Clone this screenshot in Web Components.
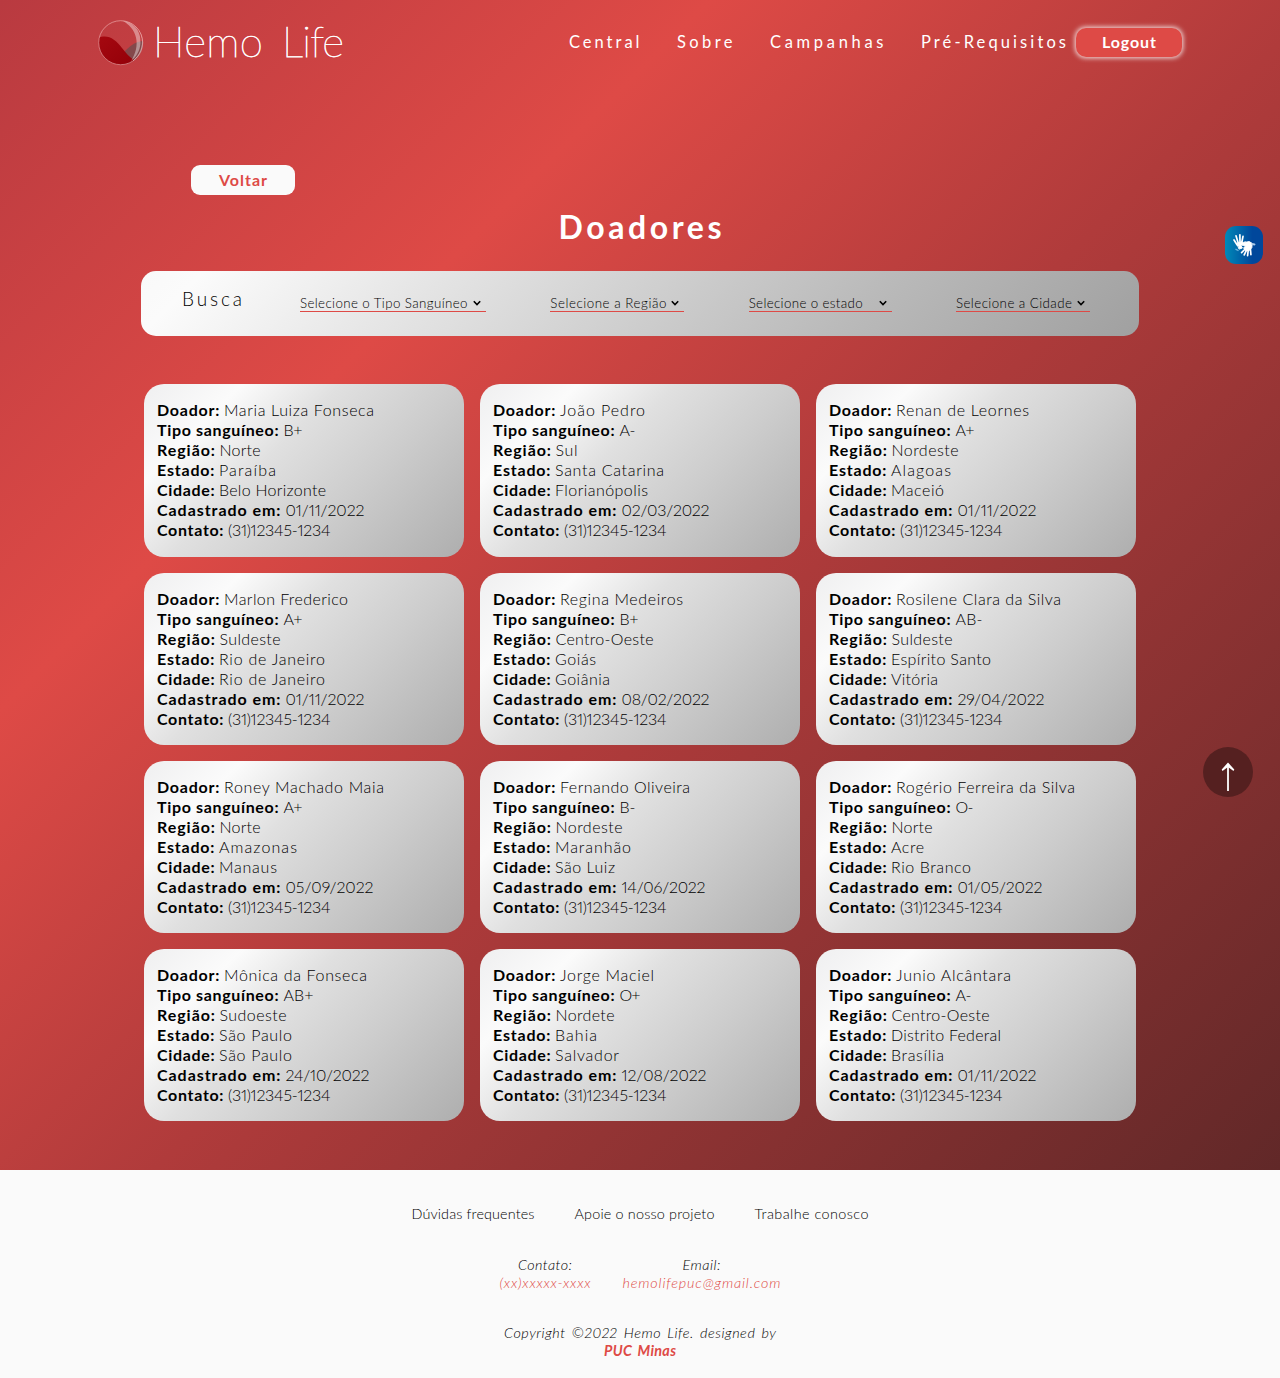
<!DOCTYPE html>
<html lang="pt-BR">
<head>
<meta charset="utf-8">
<title>Hemo Life - Doadores</title>
<style>
html, body { margin: 0; padding: 0; }
body { font-family: Lato, "Open Sans", sans-serif; color: #000; background: #fafafa; }
</style>
</head>
<body>
<hemo-page></hemo-page>
<script>
// Spaces its letters so that the word takes the width given in "w".
class FitText extends HTMLElement {
  constructor() {
    super();
    this.attachShadow({ mode: 'open' }).innerHTML =
      '<style>:host{display:inline-block;white-space:pre;font-feature-settings:"pnum" 1,"liga" 0}span{display:inline-block}</style><span><slot></slot></span>';
  }
  connectedCallback() {
    const w = parseFloat(this.getAttribute('w'));
    const n = this.textContent.length;
    const span = this.shadowRoot.querySelector('span');
    if (!w || n < 2) return;
    const gap = (w - span.getBoundingClientRect().width) / (n - 1);
    span.style.letterSpacing = gap + 'px';
    span.style.marginRight = -gap + 'px';
  }
}

class HemoLogo extends HTMLElement {
  constructor() {
    super();
    this.attachShadow({ mode: 'open' }).innerHTML = `
<style>
:host{display:flex;align-items:flex-start;height:46px}
svg{display:block;width:46px;height:46px}
.name{display:flex;gap:19px;margin:-4px 0 0 9px;font:100 42px/50px Lato,sans-serif;color:#fff;-webkit-text-stroke:.75px #fff}
</style>
<svg viewBox="0 0 46 46">
<defs><clipPath id="c"><circle cx="22.7" cy="22.7" r="22.2"/></clipPath>
<linearGradient id="b" x1="0" y1="0" x2="1" y2="1"><stop offset="0" stop-color="#a50810"/><stop offset="1" stop-color="#930008"/></linearGradient></defs>
<g clip-path="url(#c)">
<path d="M25 33C31 27 37 21 46 21V46H26Z" fill="#84484b"/>
<path d="M0 18C10 14 17 19 24 28C28 33 31 37 36 40L32 46H0Z" fill="url(#b)"/>
<path d="M23 0C38 3 43 12 42.5 23C42 31 38 37 33 41C43 26 40 8 23 0Z" fill="#fff" opacity=".4"/>
<path d="M25 0C49 5 49 30 35 41" fill="none" stroke="#fff" stroke-width="1" opacity=".4"/>
</g>
<circle cx="22.7" cy="22.7" r="22" fill="none" stroke="#f3b9b9" stroke-width=".9" opacity=".65"/>
</svg>
<div class="name"><fit-text w="110">Hemo</fit-text><fit-text w="62">Life</fit-text></div>`;
  }
}

class HemoHeader extends HTMLElement {
  constructor() {
    super();
    this.attachShadow({ mode: 'open' }).innerHTML = `
<style>
:host{display:flex;justify-content:space-between;align-items:flex-start;padding:20px 98px 0 98px;height:65px}
nav{display:flex;align-items:center;margin-top:7px;height:30px;color:#fff;font-size:16.5px;line-height:20px}
a{margin-right:37.5px}
a:last-of-type{margin-right:10px}
button{box-sizing:border-box;width:106px;height:29px;margin:0;padding:0;border:0;border-radius:10px;background:#de4a46;color:#fff;
 font:700 16px/20px Lato,sans-serif;box-shadow:0 0 5px 1px rgba(255,255,255,.85)}
</style>
<hemo-logo></hemo-logo>
<nav><a><fit-text w="70.5">Central</fit-text></a><a><fit-text w="55.5">Sobre</fit-text></a><a><fit-text w="113.5">Campanhas</fit-text></a><a><fit-text w="145">Pré-Requisitos</fit-text></a>
<button><fit-text w="54">Logout</fit-text></button></nav>`;
  }
}

class FilterSelect extends HTMLElement {
  constructor() {
    super();
    this.attachShadow({ mode: 'open' }).innerHTML = `
<style>
:host{display:flex;justify-content:space-between;align-items:center;box-sizing:border-box;height:17px;border-bottom:1px solid #de4a46;padding-right:5px;
 font:300 13.33px/16px Lato,sans-serif;color:#000}
svg{width:8px;height:6px}
</style><slot></slot><svg viewBox="0 0 8 6"><path d="M.8 1.2L4 4.5L7.2 1.2" fill="none" stroke="#000" stroke-width="1.6"/></svg>`;
  }
}

class SearchBar extends HTMLElement {
  constructor() {
    super();
    this.attachShadow({ mode: 'open' }).innerHTML = `
<style>
:host{display:flex;box-sizing:border-box;width:998px;height:65px;margin:0 auto;padding:0 49px 0 41px;border-radius:15px;
 background:linear-gradient(135deg,#f9f9f9 0%,#fbfbfb 6%,#dadada 39%,#bababa 71%,#a0a0a0 100%)}
.title{width:118px;margin-top:16px;font:300 19px/24px Lato,sans-serif}
.row{flex:1;display:flex;justify-content:space-between;margin-top:24px}
</style>
<div class="title"><fit-text w="60">Busca</fit-text></div>
<div class="row">
<filter-select style="width:186px"><fit-text w="167.5">Selecione o Tipo Sanguíneo</fit-text></filter-select>
<filter-select style="width:134px"><fit-text w="116">Selecione a Região</fit-text></filter-select>
<filter-select style="width:143px"><fit-text w="114">Selecione o estado</fit-text></filter-select>
<filter-select style="width:134px"><fit-text w="116">Selecione a Cidade</fit-text></filter-select>
</div>`;
  }
}

const LABELS = [['Doador:', 62.5, 67], ['Tipo sanguíneo:', 121.5, 126.5], ['Região:', 58, 62.5], ['Estado:', 57.5, 62], ['Cidade:', 57.5, 62], ['Cadastrado em:', 123.5, 128.5], ['Contato:', 66.5, 71]];

class DonorCard extends HTMLElement {
  constructor() {
    super();
    this.attachShadow({ mode: 'open' });
  }
  set donor(values) {
    this.shadowRoot.innerHTML = `
<style>
:host{display:block;box-sizing:border-box;height:172.15px;padding:16px 13px;border-radius:20px;
 background:linear-gradient(135deg,#efeff0 0%,#fbfbfb 20%,#e0e0e0 40%,#cdcdcd 64%,#aeaeae 100%)}
p{display:flex;margin:0;height:20px;font:300 16px/20px Lato,sans-serif}
b{font-weight:700}
</style>` + LABELS.map(([t, w, a], i) =>
      `<p><b style="width:${a}px"><fit-text w="${w}">${t}</fit-text></b><fit-text w="${values[i][1]}">${values[i][0]}</fit-text></p>`).join('');
  }
}

const TEL = ['(31)12345-1234', 102.5], D11 = ['01/11/2022', 79];
const DONORS = [
 [['Maria Luiza Fonseca',150],['B+',19],['Norte',41],['Paraíba',57],['Belo Horizonte',107],D11,TEL],
 [['João Pedro',85],['A-',16],['Sul',22],['Santa Catarina',109],['Florianópolis',93],['02/03/2022',88],TEL],
 [['Renan de Leornes',133],['A+',19],['Nordeste',67],['Alagoas',60],['Maceió',53],D11,TEL],
 [['Marlon Frederico',124],['A+',19],['Suldeste',61],['Rio de Janeiro',106],['Rio de Janeiro',106],D11,TEL],
 [['Regina Medeiros',123],['B+',19],['Centro-Oeste',98],['Goiás',41],['Goiânia',55],['08/02/2022',88],TEL],
 [['Rosilene Clara da Silva',165],['AB-',27],['Suldeste',61],['Espírito Santo',100],['Vitória',47],['29/04/2022',87],TEL],
 [['Roney Machado Maia',160],['A+',19],['Norte',41],['Amazonas',78],['Manaus',58],['05/09/2022',88],TEL],
 [['Fernando Oliveira',130],['B-',16],['Nordeste',67],['Maranhão',76],['São Luiz',60],['14/06/2022',84],TEL],
 [['Rogério Ferreira da Silva',179],['O-',18],['Norte',41],['Acre',33],['Rio Branco',80],['01/05/2022',85],TEL],
 [['Mônica da Fonseca',143],['AB+',30],['Sudoeste',67],['São Paulo',73],['São Paulo',73],['24/10/2022',84],TEL],
 [['Jorge Maciel',94],['O+',21],['Nordete',59],['Bahia',42],['Salvador',64],['12/08/2022',85],TEL],
 [['Junio Alcântara',115],['A-',16],['Centro-Oeste',98],['Distrito Federal',110],['Brasília',53],D11,TEL]
];

class DonorGrid extends HTMLElement {
  constructor() {
    super();
    this.attachShadow({ mode: 'open' }).innerHTML =
      '<style>:host{display:grid;grid-template-columns:repeat(3,320px);gap:16px;width:992px;margin:48.4px auto 0}</style>';
    for (const d of DONORS) {
      const card = document.createElement('donor-card');
      card.donor = d;
      this.shadowRoot.append(card);
    }
  }
}

class HemoFooter extends HTMLElement {
  constructor() {
    super();
    this.attachShadow({ mode: 'open' }).innerHTML = `
<style>
:host{display:flex;flex-direction:column;align-items:center;box-sizing:border-box;height:208px;padding-top:35px;background:#fafafa;font:300 14.4px/18px Lato,sans-serif}
.links{display:flex;gap:40px}
.contact{display:flex;gap:32px;margin-top:33px;font-style:italic;text-align:center}
.red{color:#de4a46}
.copy{margin-top:32px;font-style:italic;text-align:center}
b{font-weight:700}
</style>
<div class="links"><fit-text w="123">Dúvidas frequentes</fit-text><fit-text w="140">Apoie o nosso projeto</fit-text><fit-text w="114">Trabalhe conosco</fit-text></div>
<div class="contact"><div><fit-text w="54">Contato:</fit-text><br><fit-text class="red" w="91">(xx)xxxxx-xxxx</fit-text></div>
<div><fit-text w="38">Email:</fit-text><br><fit-text class="red" w="158">hemolifepuc@gmail.com</fit-text></div></div>
<div class="copy"><fit-text style="word-spacing:2px" w="272">Copyright ©2022 Hemo Life. designed by</fit-text><br><b class="red"><fit-text style="word-spacing:2px" w="72">PUC Minas</fit-text></b></div>`;
  }
}

class SignButton extends HTMLElement {
  constructor() {
    super();
    this.attachShadow({ mode: 'open' }).innerHTML = `
<style>:host{position:absolute;left:1225px;top:226px;width:38px;height:38px;border-radius:11px;background:linear-gradient(90deg,#0089b8,#00479b 72%)}svg{display:block}</style>
<svg width="38" height="38" viewBox="0 0 38 38" fill="none" stroke="#fff" stroke-linecap="round" stroke-linejoin="round">
<path d="M12.2 19L9 14M13.2 17L11 9.8M15 16L14.9 8.8M16.7 17L18 10.3" stroke-width="1.7"/>
<path d="M12 17.2L16.6 15.8L18.4 16.4L20.5 15.8L18.6 18.3L15.8 19.5L17.4 22L14.4 23Z" fill="#fff" stroke-width="1"/>
<path d="M17.6 19L20.4 16.3L24.2 15.6L27.2 17.4L26.8 21.8L24 24.8L20.4 24.4L18.6 22L20.6 19.8Z" fill="#fff" stroke-width="1"/>
<path d="M20.2 23L16.6 26.6M21.4 24.3L19.2 28.8M23.2 24.3L22.6 29.6M25.4 23L25.9 28.6" stroke-width="1.7"/>
<path d="M27.4 18L29.5 18.4" stroke="#a8c8e8" stroke-width="2"/><path d="M11 23.4L13 24.4" stroke="#67b2dc" stroke-width="1.5"/>
</svg>`;
  }
}

class TopButton extends HTMLElement {
  constructor() {
    super();
    this.attachShadow({ mode: 'open' }).innerHTML = `
<style>:host{position:absolute;left:1203px;top:747px;width:50px;height:50px;border-radius:50%;background:#552020}svg{display:block}</style>
<svg width="50" height="50" viewBox="0 0 50 50"><path d="M25 44V18" stroke="#fff" stroke-width="1.8"/><path d="M25 15.6L31.3 22.4L30.5 24.1L25 20L19.5 24.1L18.7 22.4Z" fill="#fff"/></svg>`;
  }
}

class HemoPage extends HTMLElement {
  constructor() {
    super();
    this.attachShadow({ mode: 'open' }).innerHTML = `
<style>
:host{display:block;position:relative;width:1280px;height:1378px;overflow:hidden}
main{display:block;height:1170px;background:linear-gradient(135deg,#b93a40 0%,#de4a46 29%,#b03b3b 54%,#612828 100%)}
.back{display:block;width:104px;height:30px;margin:80px 0 0 191px;padding:0;border:0;border-radius:9px;background:#fafafa;color:#de4a46;font:700 16px/20px Lato,sans-serif}
h1{margin:12px 0 24px;text-align:center;color:#fff;font:700 32px/40px Lato,sans-serif}
</style>
<main>
<hemo-header></hemo-header>
<button class="back"><fit-text w="48">Voltar</fit-text></button>
<h1><fit-text w="163">Doadores</fit-text></h1>
<search-bar></search-bar>
<donor-grid></donor-grid>
</main>
<hemo-footer></hemo-footer>
<sign-button></sign-button>
<top-button></top-button>`;
  }
}

for (const [name, cls] of [['hemo-logo', HemoLogo], ['hemo-header', HemoHeader], ['filter-select', FilterSelect], ['search-bar', SearchBar],
  ['donor-card', DonorCard], ['donor-grid', DonorGrid], ['hemo-footer', HemoFooter], ['sign-button', SignButton], ['top-button', TopButton],
  ['hemo-page', HemoPage], ['fit-text', FitText]]) customElements.define(name, cls);
</script>
</body>
</html>
